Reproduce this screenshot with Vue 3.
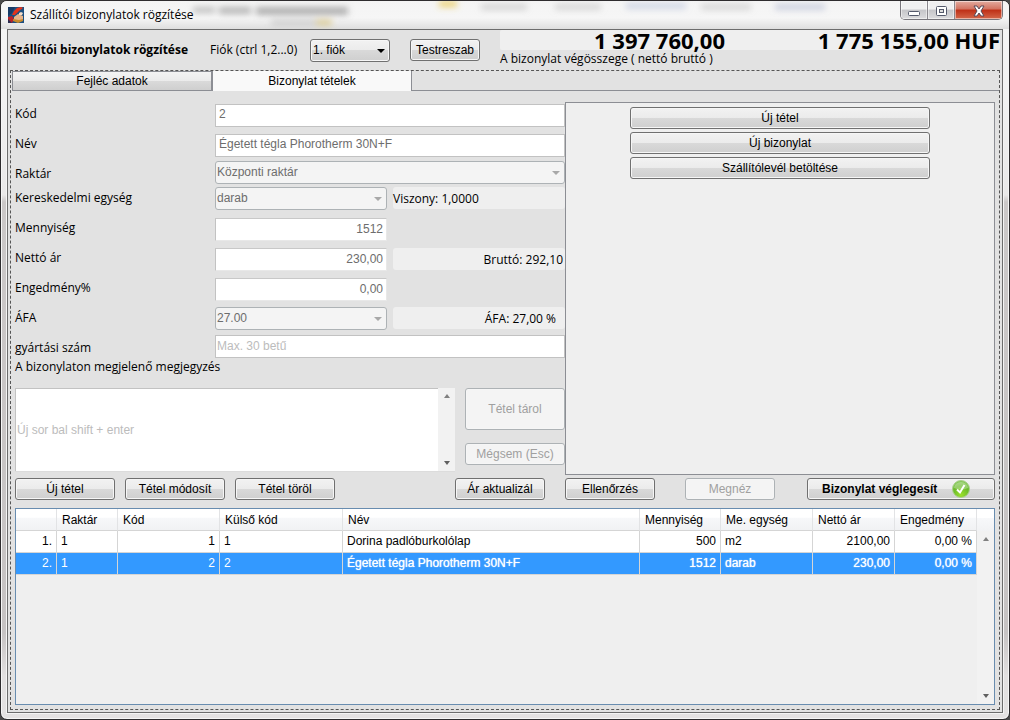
<script setup>
import { ref } from 'vue'

const branch = ref('1. fiók')
const selected = ref(1)
const columns = [
  { key: 'no', label: '', cls: 'c-no', num: true },
  { key: 'store', label: 'Raktár', cls: 'c-store' },
  { key: 'code', label: 'Kód', cls: 'c-code', num: true },
  { key: 'ext', label: 'Külső kód', cls: 'c-ext' },
  { key: 'name', label: 'Név', cls: 'c-name', strong: true },
  { key: 'qty', label: 'Mennyiség', cls: 'c-qty', num: true, strong: true },
  { key: 'unit', label: 'Me. egység', cls: 'c-unit', strong: true },
  { key: 'net', label: 'Nettó ár', cls: 'c-net', num: true, strong: true },
  { key: 'disc', label: 'Engedmény', cls: 'c-disc', num: true, strong: true }
]
const rows = [
  { no: '1.', store: '1', code: '1', ext: '1', name: 'Dorina padlóburkolólap', qty: '500', unit: 'm2', net: '2100,00', disc: '0,00 %' },
  { no: '2.', store: '1', code: '2', ext: '2', name: 'Égetett tégla Phorotherm 30N+F', qty: '1512', unit: 'darab', net: '230,00', disc: '0,00 %' }
]
</script>

<template>
  <div class="window">
    <svg class="glass" aria-hidden="true" width="100%" height="28">
      <defs>
        <filter id="soft" x="-20%" y="-80%" width="140%" height="260%"><feGaussianBlur stdDeviation="3" /></filter>
      </defs>
      <g filter="url(#soft)">
        <rect x="192" y="6" width="22" height="6" fill="#8c8c8c" opacity=".5" />
        <rect x="218" y="6" width="32" height="7" fill="#777" opacity=".5" />
        <rect x="255" y="6" width="92" height="8" fill="#777" opacity=".55" />
        <rect x="270" y="19" width="60" height="5" fill="#999" opacity=".4" />
        <rect x="315" y="19" width="16" height="5" fill="#e6c44a" opacity=".5" />
        <rect x="438" y="0" width="18" height="6" fill="#e8c33c" opacity=".7" />
        <rect x="480" y="3" width="46" height="6" fill="#aaa" opacity=".45" />
        <rect x="554" y="3" width="46" height="6" fill="#aaa" opacity=".4" />
        <rect x="625" y="2" width="60" height="6" fill="#99a8cc" opacity=".4" />
        <rect x="700" y="3" width="50" height="6" fill="#aaa" opacity=".4" />
        <rect x="774" y="3" width="50" height="6" fill="#8f9bbd" opacity=".4" />
      </g>
    </svg>
    <header class="titlebar">
      <svg class="app-icon" width="16" height="16" viewBox="0 0 16 16" aria-hidden="true">
        <rect width="16" height="16" fill="#1d4f80" />
        <path d="M0 0h7L4 6 0 9z" fill="#173a66" />
        <path d="M9 1l4-1 2 1-4 3-4 4-3 0 2-4z" fill="#e2341c" />
        <path d="M0 10l4-1 2 3-2 4H0z" fill="#b8232a" />
        <path d="M0 12l4 4H0z" fill="#2a2c50" />
        <path d="M6 10l4-3 5 2v4l-4 1-5-1z" fill="#e7b48a" />
        <path d="M5 12l6 1 4-1v2l-5 2-5-2z" fill="#c98a2a" />
        <path d="M11 6l2-1 2 1-1 2-3 0z" fill="#f4ddca" />
      </svg>
      <span class="title">Szállítói bizonylatok rögzítése</span>
      <div class="winbtns">
        <button class="wb" aria-label="Kis méret">
          <svg width="13" height="16" viewBox="0 0 13 16"><rect x=".5" y="9.5" width="11" height="4" rx="1" fill="#fff" stroke="#555a6c" /></svg>
        </button>
        <button class="wb" aria-label="Teljes méret">
          <svg width="13" height="16" viewBox="0 0 13 16"><rect x="1.500" y="4.500" width="10" height="9" rx="1" fill="#fff" stroke="#555a6c" /><rect x="4.500" y="7.500" width="4" height="3" fill="#ddd" stroke="#555a6c" /></svg>
        </button>
        <button class="wb close" aria-label="Bezárás">
          <svg width="14" height="16" viewBox="0 0 14 16"><path d="M2 4h3l2 3 2-3h3L9 9l3 5H9l-2-3-2 3H2l3-5z" fill="#fff" stroke="#5a4a58" /></svg>
        </button>
      </div>
    </header>

    <main class="client">
      <section class="top">
        <h1>Szállítói bizonylatok rögzítése</h1>
        <label for="branch" class="seg">Fiók (ctrl 1,2...0)</label>
        <span class="combo live">
          <select id="branch" v-model="branch"><option>1. fiók</option></select>
        </span>
        <button class="btn">Testreszab</button>
        <div class="totals">
          <div class="sums"><output class="net">1 397 760,00</output><output>1 775 155,00 HUF</output></div>
          <div class="seg">A bizonylat végösszege ( nettó bruttó )</div>
        </div>
      </section>

      <section class="tabbed">
        <div class="tabs" role="tablist">
          <button class="tab" role="tab" aria-selected="false">Fejléc adatok</button>
          <button class="tab active" role="tab" aria-selected="true">Bizonylat tételek</button>
          <span class="rest"></span>
        </div>

        <div class="upper">
          <form class="form" @submit.prevent>
            <div class="fields seg">
              <label for="kod">Kód</label>
              <input id="kod" class="wide inset" value="2" disabled />
              <label for="nev">Név</label>
              <input id="nev" class="wide inset" value="Égetett tégla Phorotherm 30N+F" disabled />
              <label for="raktar" class="low">Raktár</label>
              <span class="combo wide"><select id="raktar" disabled><option>Központi raktár</option></select></span>
              <label for="egyseg" class="mid">Kereskedelmi egység</label>
              <span class="combo"><select id="egyseg" disabled><option>darab</option></select></span>
              <output class="info">Viszony: 1,0000</output>
              <label for="menny">Mennyiség</label>
              <input id="menny" class="amount" value="1512" disabled />
              <label for="netto">Nettó ár</label>
              <input id="netto" class="amount" value="230,00" disabled />
              <output class="info right">Bruttó: 292,10</output>
              <label for="eng">Engedmény%</label>
              <input id="eng" class="amount" value="0,00" disabled />
              <label for="afa" class="mid">ÁFA</label>
              <span class="combo"><select id="afa" disabled><option>27.00</option></select></span>
              <output class="info right vat">ÁFA: 27,00 %</output>
              <label for="gysz" class="low">gyártási szám</label>
              <input id="gysz" class="wide" placeholder="Max. 30 betű" disabled />
            </div>
            <label for="note" class="note-label seg">A bizonylaton megjelenő megjegyzés</label>
            <div class="note-row">
              <div class="note">
                <textarea id="note" placeholder="Új sor bal shift + enter" disabled></textarea>
                <div class="scroll"><i class="up"></i><i class="down"></i></div>
              </div>
              <div class="note-btns">
                <button class="btn tall" disabled>Tétel tárol</button>
                <button class="btn" disabled>Mégsem (Esc)</button>
              </div>
            </div>
          </form>
          <aside class="side">
            <button class="btn">Új tétel</button>
            <button class="btn">Új bizonylat</button>
            <button class="btn">Szállítólevél betöltése</button>
          </aside>
        </div>

        <div class="toolbar">
          <div class="group">
            <button class="btn">Új tétel</button>
            <button class="btn">Tétel módosít</button>
            <button class="btn">Tétel töröl</button>
          </div>
          <button class="btn mid">Ár aktualizál</button>
          <button class="btn mid check">Ellenőrzés</button>
          <button class="btn mid view" disabled>Megnéz</button>
          <button class="btn final">
            Bizonylat véglegesít
            <svg width="18" height="18" viewBox="0 0 18 18" aria-hidden="true">
              <defs>
                <radialGradient id="ball" cx="50%" cy="85%" r="85%">
                  <stop offset="0" stop-color="#9be02c" /><stop offset=".6" stop-color="#6ab92a" /><stop offset="1" stop-color="#8ccc62" />
                </radialGradient>
              </defs>
              <circle cx="9" cy="9" r="8.500" fill="url(#ball)" stroke="#a9cf8c" />
              <path d="M2 8a7 6 0 0 1 14 0q-7 3-14 0z" fill="#fff" opacity=".3" />
              <path d="M5 9.500L8 12.500l4.500-7.500" fill="none" stroke="#fff" stroke-width="2" />
            </svg>
          </button>
        </div>

        <div class="grid">
          <table>
            <thead>
              <tr><th v-for="c in columns" :key="c.key" :class="c.cls" scope="col">{{ c.label }}</th></tr>
            </thead>
            <tbody>
              <tr v-for="(r, i) in rows" :key="r.no" :class="{ sel: i === selected }" @click="selected = i">
                <td v-for="c in columns" :key="c.key" :class="{ num: c.num, strong: c.strong }">{{ r[c.key] }}</td>
              </tr>
            </tbody>
          </table>
          <div class="gutter">
            <div class="corner"></div>
            <div class="scroll"><i class="up"></i><i class="down"></i></div>
          </div>
        </div>
      </section>
    </main>
  </div>
</template>

<style>
body { margin: 0; background: #4a4a4a; }
</style>

<style scoped>
* { box-sizing: border-box; }
.window {
  position: relative;
  display: flex;
  flex-direction: column;
  min-height: 100vh;
  padding: 0 6px 6px;
  border: 1px solid #2e2c2e;
  border-radius: 7px;
  background: linear-gradient(#f6f6f6 0, #f1f1f1 100px, #e9e8e8 27%, #cbc8c8 28%, #c6c3c3 88%, #e2e0e0 94%, #e4e2e2 100%);
  box-shadow: inset 0 0 0 1px #f6f6f6;
  font: 12px/16px "Liberation Sans", Arial, sans-serif;
  color: #000;
}
button, input, select, textarea { font: inherit; color: inherit; margin: 0; }
.seg, h1, .title { font-family: "Open Sans", "Noto Sans", sans-serif; font-size: 12px; }
.glass { position: absolute; left: 0; top: 0; background: linear-gradient(#f4f4f4, #f6f6f6 60%, #dedede); border-radius: 6px 6px 0 0; }
.titlebar { position: relative; display: flex; align-items: center; height: 28px; padding-left: 1px; }
.title { margin-left: 6px; }
.app-icon { flex: none; }
.winbtns { display: flex; align-self: flex-start; margin-left: auto; border: 1px solid #77757b; border-top: 0; border-radius: 0 0 5px 5px; overflow: hidden; }
.wb { display: flex; align-items: center; justify-content: center; width: 27px; height: 18px; padding: 0; border: 0; border-right: 1px solid #8a888e; background: linear-gradient(#f0f0f1 0 45%, #c5c5c9 50%, #dcdcde); box-shadow: inset 0 0 0 1px #ffffff80; }
.wb.close { width: 47px; border-right: 0; background: linear-gradient(#e3aca0 0, #d27260 45%, #be2f16 50%, #d4674a); }

.client { flex: 1; display: flex; flex-direction: column; padding: 0 2px 2px; border: 1px solid #6c6c6c; background: #e2e2e2; box-shadow: 0 0 0 1px #f4f4f4; }
.top { display: flex; align-items: center; height: 40px; }
h1 { flex: none; width: 200px; margin: 0; font-weight: 700; line-height: 16px; white-space: nowrap; }
.top > label { flex: none; width: 100px; white-space: nowrap; }
.top .combo { flex: none; width: 80px; margin-right: 20px; }
.top .btn { flex: none; width: 70px; margin-right: 20px; }
.totals { flex: 1; align-self: stretch; }
.sums { display: flex; justify-content: space-between; height: 20px; border-radius: 2px; background: #efefef; font: 700 22px/20px "Open Sans", "Noto Sans", sans-serif; white-space: nowrap; }
.sums .net { width: 45%; text-align: right; }
.totals .seg { line-height: 18px; }

.btn { height: 22px; padding: 0; border: 1px solid #707070; border-radius: 3px; background: linear-gradient(#f2f2f2 0, #ebebeb 50%, #d9d9d9 50%, #cfcfcf); box-shadow: inset 0 0 0 1px #f6f6f6; line-height: 16px; white-space: nowrap; }
.btn:disabled { border-color: #adb2b5; background: #f4f4f4; color: #a0a0a0; }
.combo { position: relative; display: block; height: 23px; }
.combo select { appearance: none; width: 100%; height: 100%; padding: 0 20px 2px 1px; border: 1px solid #adb2b5; border-radius: 3px; background: #f4f4f4; color: #6d6d6d; opacity: 1; }
.combo.live select { border-color: #707070; color: #000; padding: 0 20px 0 2px; background: linear-gradient(#f2f2f2 0, #ebebeb 50%, #d9d9d9 50%, #cfcfcf); box-shadow: inset 0 0 0 1px #f6f6f6; }
.combo::after { content: ""; position: absolute; right: 5px; top: 10px; border: 4px solid transparent; border-top-color: #a8a8a8; border-bottom: 0; pointer-events: none; }
.combo.live::after { border-top-color: #000; }

.tabbed { flex: 1; display: flex; flex-direction: column; border: 1px dashed #555; }
.tabs { display: flex; height: 20px; padding-left: 1px; }
.tab { width: 201px; padding: 0; border: 1px solid #8c8e94; border-width: 1px 2px 1px 1px; background: linear-gradient(#f3f3f3 0, #ebebeb 50%, #dadada 50%, #cfcfcf); line-height: 18px; }
.tab.active { width: 199px; border: 0; border-right: 1px solid #8c8e94; background: #f9f9f9; }
.rest { flex: 1; border-bottom: 1px solid #8c8e94; }

.upper { display: flex; padding: 11px 4px 0; }
.form { flex: none; width: 550px; padding-top: 2px; }
.fields { display: grid; grid-template-columns: 200px 172px 6px 1fr; grid-template-rows: 30px 27px 26px 31px 30px 30px 29px 28px 23px; align-items: start; }
.fields > label { grid-column: 1; line-height: 20px; }
.fields > .mid { line-height: 22px; }
.fields > .low { line-height: 26px; }
.fields input, .fields select { font-family: "Liberation Sans", Arial, sans-serif; }
.fields input { grid-column: 2; width: 100%; height: 23px; padding: 0 2px 2px 1px; border: 1px solid #c2c2c2; background: #fff; color: #6d6d6d; border-radius: 0; }
.fields input.inset { padding: 0 3px 4px; }
.fields input.amount { padding: 0 3px 2px 1px; border-color: #c8c8c8 #e8e8e8 #e8e8e8 #c2c2c2; text-align: right; }
.fields .wide { grid-column: 2 / -1; }
.info { grid-column: 4; height: 22px; padding: 0 2px 0 0; border-radius: 3px; background: #efefef; line-height: 24px; white-space: nowrap; }
.info.right { text-align: right; }
.info.vat { padding-right: 9px; }
::placeholder { color: #bcbcbc; opacity: 1; }
.note-label { display: block; line-height: 18px; }
.note-row { display: flex; gap: 10px; margin-top: 12px; }
.note { flex: 1; display: flex; height: 84px; border-bottom: 1px solid #dcdcdc; }
.note textarea { flex: 1; min-width: 0; padding: 33px 1px 0; border: 1px solid #c2c2c2; border-right: 0; border-bottom: 0; border-radius: 0; background: #fff; line-height: 16px; resize: none; overflow: hidden; }
.note-btns { display: flex; flex-direction: column; gap: 13px; width: 100px; }
.note-btns .tall { height: 42px; }
.side { flex: 1; display: flex; flex-direction: column; align-items: center; gap: 3px; padding-top: 4px; border: 1px solid #8c8e94; background: #efefef; margin-bottom: -3px; }
.side .btn { width: 300px; }

.scroll { flex: none; width: 17px; display: flex; flex-direction: column; justify-content: space-between; align-items: center; padding: 6px 0; background: #f2f2f2; }
.scroll i { border: 3px solid transparent; }
.up { border-top: 0 !important; border-bottom: 4px solid #808080 !important; }
.down { border-bottom: 0 !important; border-top: 4px solid #606060 !important; }

.toolbar { display: flex; margin: 6px 4px 8px; }
.group { display: flex; gap: 10px; margin-right: 120px; }
.group .btn { width: 100px; }
.toolbar .mid { width: 90px; }
.toolbar .check { margin-left: 20px; }
.toolbar .view { margin-left: 30px; }
.final { display: flex; align-items: center; gap: 15px; width: 188px; margin-left: auto; padding-left: 14px; font-weight: 700; }

.grid { flex: 1; display: flex; align-items: stretch; margin: 0 4px 4px; border: 1px solid #688caf; background: #efefef; }
table { flex: 1; align-self: flex-start; border-collapse: separate; border-spacing: 0; table-layout: fixed; }
th, td { height: 22px; padding: 0 4px; border-right: 1px solid #d5d5d5; border-bottom: 1px solid #d5d5d5; font-weight: 400; text-align: left; white-space: nowrap; overflow: hidden; line-height: 16px; }
th { padding: 0 5px; background: linear-gradient(#fff 0, #fff 40%, #f7f8fa 42%, #f1f2f4); border-right-color: #e2e3e5; }
td { background: #fff; padding-bottom: 2px; }
td.num { text-align: right; }
.sel td { background: #3399ff; color: #fff; }
.sel td.strong { text-shadow: 0 0 1px #fff; }
.c-no { width: 41px; }
.c-store { width: 61px; }
.c-code { width: 102px; }
.c-ext { width: 123px; }
.c-qty { width: 81px; }
.c-unit { width: 92px; }
.c-net { width: 82px; }
.c-disc { width: 82px; }
.gutter { display: flex; flex-direction: column; width: 17px; }
.corner { height: 22px; background: linear-gradient(#fff 0, #fff 40%, #f7f8fa 42%, #f1f2f4); }
.gutter .scroll { flex: 1; }
</style>
